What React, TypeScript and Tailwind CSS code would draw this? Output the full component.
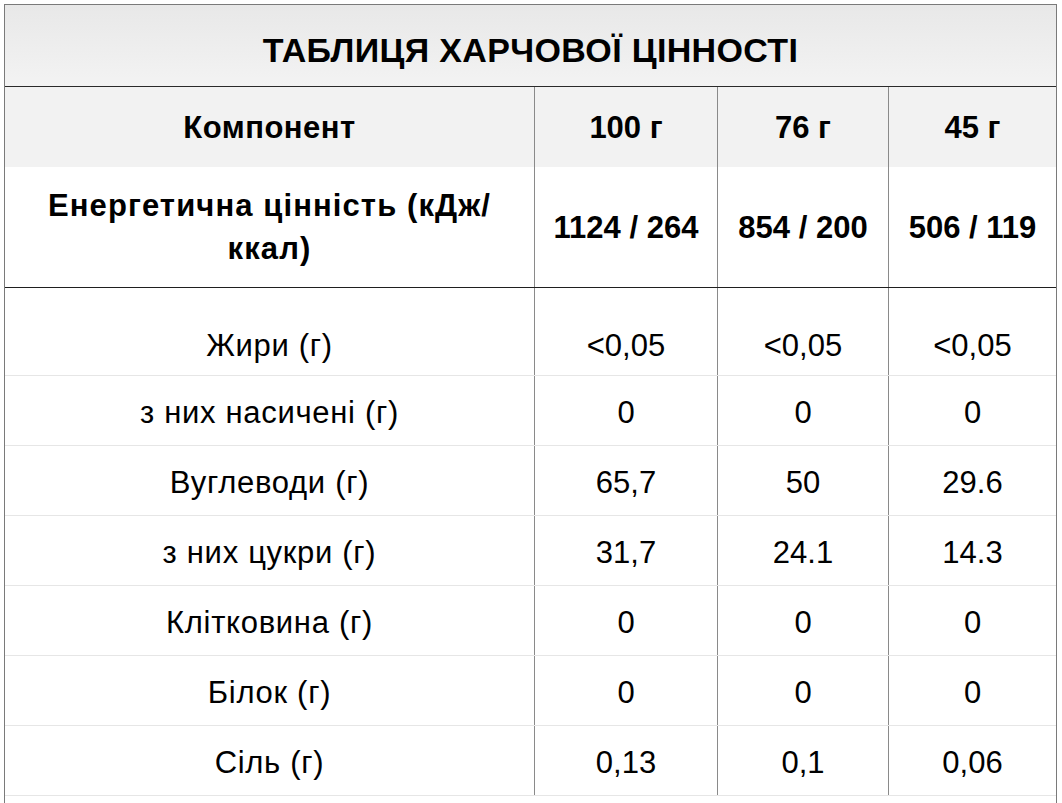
import React from "react";

// nutrition rows: label + values for 100 г / 76 г / 45 г
const rows = [
  { label: "з них насичені (г)", values: ["0", "0", "0"] },
  { label: "Вуглеводи (г)", values: ["65,7", "50", "29.6"] },
  { label: "з них цукри (г)", values: ["31,7", "24.1", "14.3"] },
  { label: "Клітковина (г)", values: ["0", "0", "0"] },
  { label: "Білок (г)", values: ["0", "0", "0"] },
  { label: "Сіль (г)", values: ["0,13", "0,1", "0,06"] },
];

const grid = "grid grid-cols-[529px_183px_171px_168px]";
const cell = "flex items-center justify-center text-center";
const divider = "border-l border-[#8a8a8a]";

export default function App() {
  return (
    <div
      className="min-h-screen bg-white text-black"
      style={{ fontFamily: "'Liberation Sans', Arial, sans-serif" }}
    >
      <div className="ml-1 mt-1 w-[1053px] border-x border-t border-[#7a7a7a] pb-6">
        {/* Title */}
        <div className="flex h-[82px] items-center justify-center border-b border-[#2a2a2a] bg-gradient-to-b from-[#e8e8e8] to-[#f3f3f3] pt-[9px]">
          <h1 className="text-[34px] font-bold leading-none tracking-[0.35px]">
            ТАБЛИЦЯ ХАРЧОВОЇ ЦІННОСТІ
          </h1>
        </div>

        {/* Header */}
        <div className={`${grid} h-[80px] bg-[#f2f2f2] text-[31px] font-bold leading-[43px]`}>
          <div className={`${cell} tracking-[0.5px]`}>Компонент</div>
          <div className={`${cell} ${divider}`}>100 г</div>
          <div className={`${cell} ${divider}`}>76 г</div>
          <div className={`${cell} ${divider}`}>45 г</div>
        </div>

        {/* Energy */}
        <div className={`${grid} h-[121px] border-b border-[#1f1f1f] text-[31px] font-bold leading-[43px]`}>
          <div className={`${cell} tracking-[1.1px]`}>
            Енергетична цінність (кДж/
            <br />
            ккал)
          </div>
          <div className={`${cell} ${divider}`}>1124 / 264</div>
          <div className={`${cell} ${divider}`}>854 / 200</div>
          <div className={`${cell} ${divider}`}>506 / 119</div>
        </div>

        {/* Fats (taller row) */}
        <div className={`${grid} h-[88px] border-b border-[#e6e6e6] text-[31px] leading-[43px]`}>
          <div className={`${cell} pt-[28px] tracking-[0.7px]`}>Жири (г)</div>
          <div className={`${cell} ${divider} pt-[28px]`}>&lt;0,05</div>
          <div className={`${cell} ${divider} pt-[28px]`}>&lt;0,05</div>
          <div className={`${cell} ${divider} pt-[28px]`}>&lt;0,05</div>
        </div>

        {rows.map((row) => (
          <div
            key={row.label}
            className={`${grid} h-[70px] border-b border-[#e6e6e6] text-[31px] leading-[43px]`}
          >
            <div className={`${cell} pt-[3px] tracking-[0.7px]`}>{row.label}</div>
            {row.values.map((v, i) => (
              <div key={i} className={`${cell} ${divider} pt-[3px]`}>
                {v}
              </div>
            ))}
          </div>
        ))}
      </div>
    </div>
  );
}
